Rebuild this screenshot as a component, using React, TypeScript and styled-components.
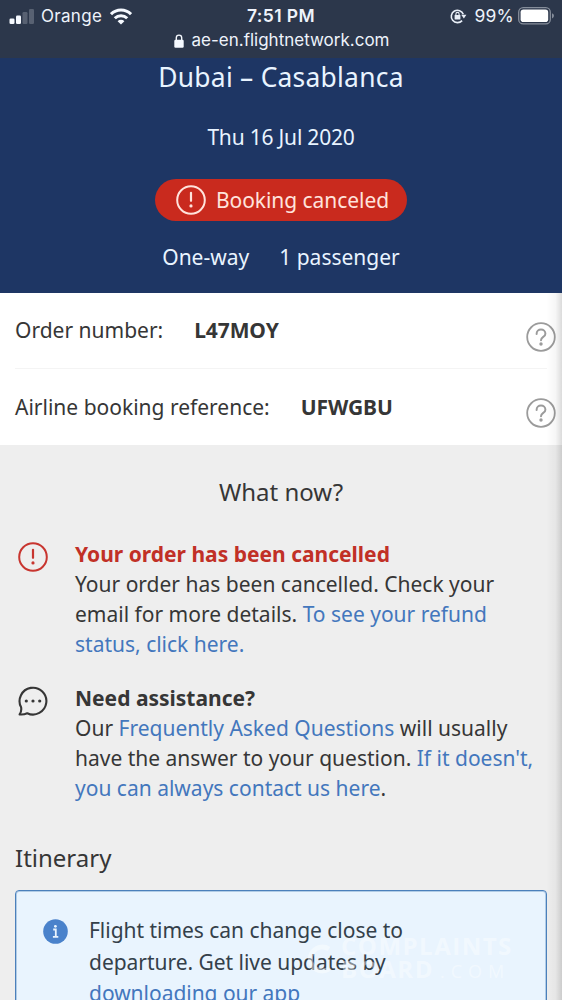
import React from "react";
import styled, { createGlobalStyle } from "styled-components";

const Global = createGlobalStyle`
  * { box-sizing: border-box; }
  body { margin: 0; overflow: hidden; }
`;

const Screen = styled.div`
  position: relative;
  width: 562px;
  height: 1000px;
  overflow: hidden;
  display: flex;
  flex-direction: column;
  background: #eeeeee;
  color: #363636;
  font: 400 21px/30px "Noto Sans", sans-serif;
  white-space: nowrap;
`;

const EdgeShade = styled.div`
  position: absolute;
  top: 293px;
  right: 0;
  bottom: 0;
  width: 16px;
  background: linear-gradient(to right, rgba(0, 0, 0, 0), rgba(0, 0, 0, 0.035) 60%, rgba(0, 0, 0, 0.14));
`;

const BrowserBar = styled.header`
  flex: none;
  height: 58px;
  padding: 5px 8px 0;
  background: #2c374b;
  color: #eef3fb;
  font-family: Inter, sans-serif;
  font-size: 17px;
`;

const StatusRow = styled.div`
  display: grid;
  grid-template-columns: 1fr auto 1fr;
  align-items: center;
  height: 22px;
  line-height: 22px;
`;

const StatusGroup = styled.div<{ $end?: boolean }>`
  display: flex;
  align-items: center;
  justify-content: ${(p) => (p.$end ? "flex-end" : "flex-start")};
`;

const Carrier = styled.span`
  margin: 0 8px 0 7px;
  letter-spacing: 0.3px;
`;

const Clock = styled.span`
  font-size: 17.5px;
  font-weight: 600;
  letter-spacing: 0.4px;
`;

const Percent = styled.span`
  margin: 0 4px 0 8px;
  font-size: 17.5px;
  letter-spacing: 0.2px;
`;

const AddressRow = styled.div`
  display: flex;
  align-items: center;
  justify-content: center;
  gap: 8px;
  height: 27px;
  line-height: 27px;
  padding-left: 1px;
`;

const Trip = styled.section`
  flex: none;
  display: flex;
  flex-direction: column;
  align-items: center;
  height: 235px;
  background: #1e3664;
  color: #e9f4ff;
`;

const Route = styled.h1`
  margin: 0;
  padding-top: 1px;
  font-size: 26.4px;
  font-weight: 400;
  line-height: 36px;
  letter-spacing: 0.25px;
`;

const TripDate = styled.div`
  margin-top: 27px;
  letter-spacing: -0.2px;
`;

const Badge = styled.div`
  display: flex;
  align-items: center;
  gap: 10px;
  margin-top: 27px;
  height: 42px;
  padding: 0 18px 0 21px;
  border-radius: 21px;
  background: #c92a1e;
  color: #ffe3dc;
  letter-spacing: -0.05px;
`;

const TripFacts = styled.div`
  display: flex;
  gap: 30px;
  margin-top: 21px;
`;

const References = styled.section`
  flex: none;
  height: 152px;
  padding: 0 6px 0 15px;
  background: #fff;
`;

const ReferenceRow = styled.div<{ $top: number }>`
  display: flex;
  height: 76px;
  padding-top: ${(p) => p.$top}px;
`;

const Divider = styled.hr`
  height: 1px;
  margin: -1px 9px 0 0;
  border: 0;
  background: #f4f4f4;
`;

const Code = styled.strong`
  margin-left: 31px;
  letter-spacing: -0.1px;
`;

const HelpButton = styled.button<{ $top: number }>`
  width: 30px;
  height: 30px;
  margin: ${(p) => p.$top}px 0 0 auto;
  padding: 0;
  border: 0;
  background: none;
  color: #9b9b9b;
`;

const SectionTitle = styled.h2<{ $center?: boolean }>`
  margin: 0;
  font-size: 24px;
  font-weight: 400;
  line-height: 34px;
  text-align: ${(p) => (p.$center ? "center" : "left")};
`;

const Content = styled.main`
  padding: 30px 15px 0;
`;

const Notice = styled.article<{ $top: number }>`
  display: flex;
  gap: 27px;
  margin-top: ${(p) => p.$top}px;
  padding-left: 3px;
`;

const NoticeIcon = styled.div<{ $alert?: boolean }>`
  flex: none;
  width: 30px;
  height: 30px;
  margin-top: 3px;
  color: ${(p) => (p.$alert ? "#c8352f" : "inherit")};
`;

const NoticeTitle = styled.h3<{ $alert?: boolean }>`
  margin: 0;
  font-size: 21px;
  font-weight: 700;
  line-height: 30px;
  color: ${(p) => (p.$alert ? "#c13026" : "inherit")};
`;

const Line = styled.div``;

const Link = styled.a`
  color: #4377bd;
`;

const Heading = styled.div`
  margin-top: 38px;
`;

const InfoCard = styled.aside`
  display: flex;
  gap: 21px;
  height: 150px;
  margin-top: 15px;
  padding: 24px 0 0 27px;
  border: 1px solid #4b80bb;
  border-radius: 4px;
  box-shadow: inset 0 0 0 1px rgba(75, 128, 187, 0.35);
  background: #e9f4fe;
  color: #34404a;
  line-height: 31.5px;
  letter-spacing: -0.03px;
`;

const InfoIcon = styled.svg`
  flex: none;
  margin-top: 4px;
`;

const Watermark = styled.div`
  position: absolute;
  left: 303px;
  top: 934px;
  display: flex;
  align-items: center;
  gap: 6px;
  color: rgba(255, 255, 255, 0.42);
  font: 700 24px/23px "Open Sans", sans-serif;
`;

const WatermarkLine = styled.div`
  display: flex;
  align-items: baseline;
  gap: 6px;
  letter-spacing: 1.5px;
`;

const WatermarkSuffix = styled.span`
  font-size: 18px;
  font-weight: 400;
  letter-spacing: 6px;
`;

const Exclaim = () => (
  <svg width="30" height="30" viewBox="0 0 30 30" fill="none" stroke="currentColor" strokeWidth="2" display="block">
    <circle cx="15" cy="15" r="13.8" />
    <path d="M15 7.8v8" strokeWidth="2.2" strokeLinecap="round" />
    <circle cx="15" cy="20.9" r="1.6" fill="currentColor" stroke="none" />
  </svg>
);

const Help = () => (
  <svg width="30" height="30" viewBox="0 0 30 30" fill="none" stroke="currentColor" strokeWidth="1.8" display="block">
    <circle cx="15" cy="15" r="13.8" />
    <path d="M10.6 11.9c0-2.6 1.9-4.3 4.4-4.3s4.4 1.7 4.4 4.1c0 3.4-4.4 2.9-4.4 6.5" strokeWidth="2" strokeLinecap="round" />
    <circle cx="15" cy="22" r="1.7" fill="currentColor" stroke="none" />
  </svg>
);

const Chat = () => (
  <svg width="30" height="30" viewBox="0 0 30 30" fill="none" stroke="currentColor" strokeWidth="2.1" strokeLinejoin="round" display="block">
    <path d="M3.1 21.3A13.4 13.4 0 1 1 9.2 27.2Q5.6 28.9 1.6 28.4Q3.8 25.3 3.1 21.3Z" />
    <g fill="currentColor" stroke="none">
      <circle cx="8.3" cy="15" r="1.6" />
      <circle cx="15" cy="15" r="1.6" />
      <circle cx="21.7" cy="15" r="1.6" />
    </g>
  </svg>
);

export default function App() {
  return (
    <Screen>
      <Global />
      <BrowserBar>
        <StatusRow>
          <StatusGroup>
            <svg width="26" height="17" viewBox="0 0 26 17" fill="#f5f9ff">
              <rect x="1.5" y="10.5" width="5" height="5.5" rx="1.3" />
              <rect x="8" y="7.5" width="5" height="8.5" rx="1.3" />
              <rect x="14.5" y="4" width="5" height="12" rx="1.3" opacity=".22" />
              <rect x="21" y="1" width="5" height="15" rx="1.3" opacity=".22" />
            </svg>
            <Carrier>Orange</Carrier>
            <svg width="22" height="17" viewBox="0 0 22 17" fill="none" stroke="#f5f9ff" strokeWidth="3">
              <path d="M1 6.2a14.2 14.2 0 0 1 20 0" />
              <path d="M4.8 10.3a8.8 8.8 0 0 1 12.4 0" />
              <path d="M7.6 13.2a4.8 4.8 0 0 1 6.8 0L11 16.6Z" fill="#f5f9ff" stroke="none" />
            </svg>
          </StatusGroup>
          <Clock>7:51 PM</Clock>
          <StatusGroup $end>
            <svg width="17" height="16" viewBox="0 0 17 16" fill="none" stroke="#e8eef7" strokeWidth="1.6">
              <path d="M12.1 12.6A6.2 6.2 0 1 1 13.3 6.3" />
              <path d="M11.2 6.8h5.2l-2.5 3.6Z" fill="#e8eef7" stroke="none" />
              <rect x="4.6" y="7" width="5.8" height="4.5" rx=".6" fill="#e8eef7" stroke="none" />
              <path d="M5.9 7.4V6a1.6 1.6 0 0 1 3.2 0v1.4" strokeWidth="1.1" />
            </svg>
            <Percent>99%</Percent>
            <svg width="36" height="18" viewBox="0 0 36 18">
              <rect x=".7" y=".7" width="31.6" height="16.2" rx="4.5" fill="none" stroke="#858d9a" strokeWidth="1.3" />
              <rect x="2.6" y="2.6" width="27.6" height="12.4" rx="2.8" fill="#fff" />
              <path d="M34 6.2q2 .8 2 2.6t-2 2.6Z" fill="#858d9a" />
            </svg>
          </StatusGroup>
        </StatusRow>
        <AddressRow>
          <svg width="10" height="14" viewBox="0 0 10 14" fill="#f5f9ff">
            <rect x=".3" y="5.8" width="9.4" height="8" rx="1.2" />
            <path d="M2.3 6.5V3.8a2.7 2.7 0 0 1 5.4 0v2.7" fill="none" stroke="#f5f9ff" strokeWidth="1.4" />
          </svg>
          <span>ae-en.flightnetwork.com</span>
        </AddressRow>
      </BrowserBar>

      <Trip>
        <Route>Dubai – Casablanca</Route>
        <TripDate>Thu 16 Jul 2020</TripDate>
        <Badge>
          <Exclaim />
          Booking canceled
        </Badge>
        <TripFacts>
          <span>One-way</span>
          <span>1 passenger</span>
        </TripFacts>
      </Trip>

      <References>
        <ReferenceRow $top={22}>
          <span>Order number:</span>
          <Code>L47MOY</Code>
          <HelpButton $top={7} aria-label="Help"><Help /></HelpButton>
        </ReferenceRow>
        <Divider />
        <ReferenceRow $top={23}>
          <span>Airline booking reference:</span>
          <Code>UFWGBU</Code>
          <HelpButton $top={6} aria-label="Help"><Help /></HelpButton>
        </ReferenceRow>
      </References>

      <Content>
        <SectionTitle $center>What now?</SectionTitle>
        <Notice $top={30}>
          <NoticeIcon $alert><Exclaim /></NoticeIcon>
          <div>
            <NoticeTitle $alert>Your order has been cancelled</NoticeTitle>
            <Line>Your order has been cancelled. Check your</Line>
            <Line>email for more details. <Link>To see your refund</Link></Line>
            <Line><Link>status, click here.</Link></Line>
          </div>
        </Notice>
        <Notice $top={24}>
          <NoticeIcon><Chat /></NoticeIcon>
          <div>
            <NoticeTitle>Need assistance?</NoticeTitle>
            <Line>Our <Link>Frequently Asked Questions</Link> will usually</Line>
            <Line>have the answer to your question. <Link>If it doesn't,</Link></Line>
            <Line><Link>you can always contact us here</Link>.</Line>
          </div>
        </Notice>
        <Heading><SectionTitle>Itinerary</SectionTitle></Heading>
        <InfoCard>
          <InfoIcon width="25" height="25" viewBox="0 0 25 25">
            <circle cx="12.5" cy="12.5" r="12.3" fill="#4a82cb" />
            <g fill="none" stroke="#e9f4fe" strokeWidth="1.8">
              <path d="M10.2 10.5h2.6v7.2M9.9 17.9h5.4" />
            </g>
            <circle cx="12.4" cy="7.3" r="1.4" fill="#e9f4fe" />
          </InfoIcon>
          <div>
            <Line>Flight times can change close to</Line>
            <Line>departure. Get live updates by</Line>
            <Line><Link>downloading our app</Link></Line>
          </div>
        </InfoCard>
      </Content>
      <EdgeShade />
      <Watermark>
        <svg width="32" height="44" viewBox="0 0 32 44" fill="none" stroke="currentColor" strokeWidth="5">
          <path d="M26 12A12 12 0 1 0 26 32" />
        </svg>
        <div>
          <WatermarkLine>COMPLAINTS</WatermarkLine>
          <WatermarkLine>BOARD<WatermarkSuffix>.COM</WatermarkSuffix></WatermarkLine>
        </div>
      </Watermark>
    </Screen>
  );
}
